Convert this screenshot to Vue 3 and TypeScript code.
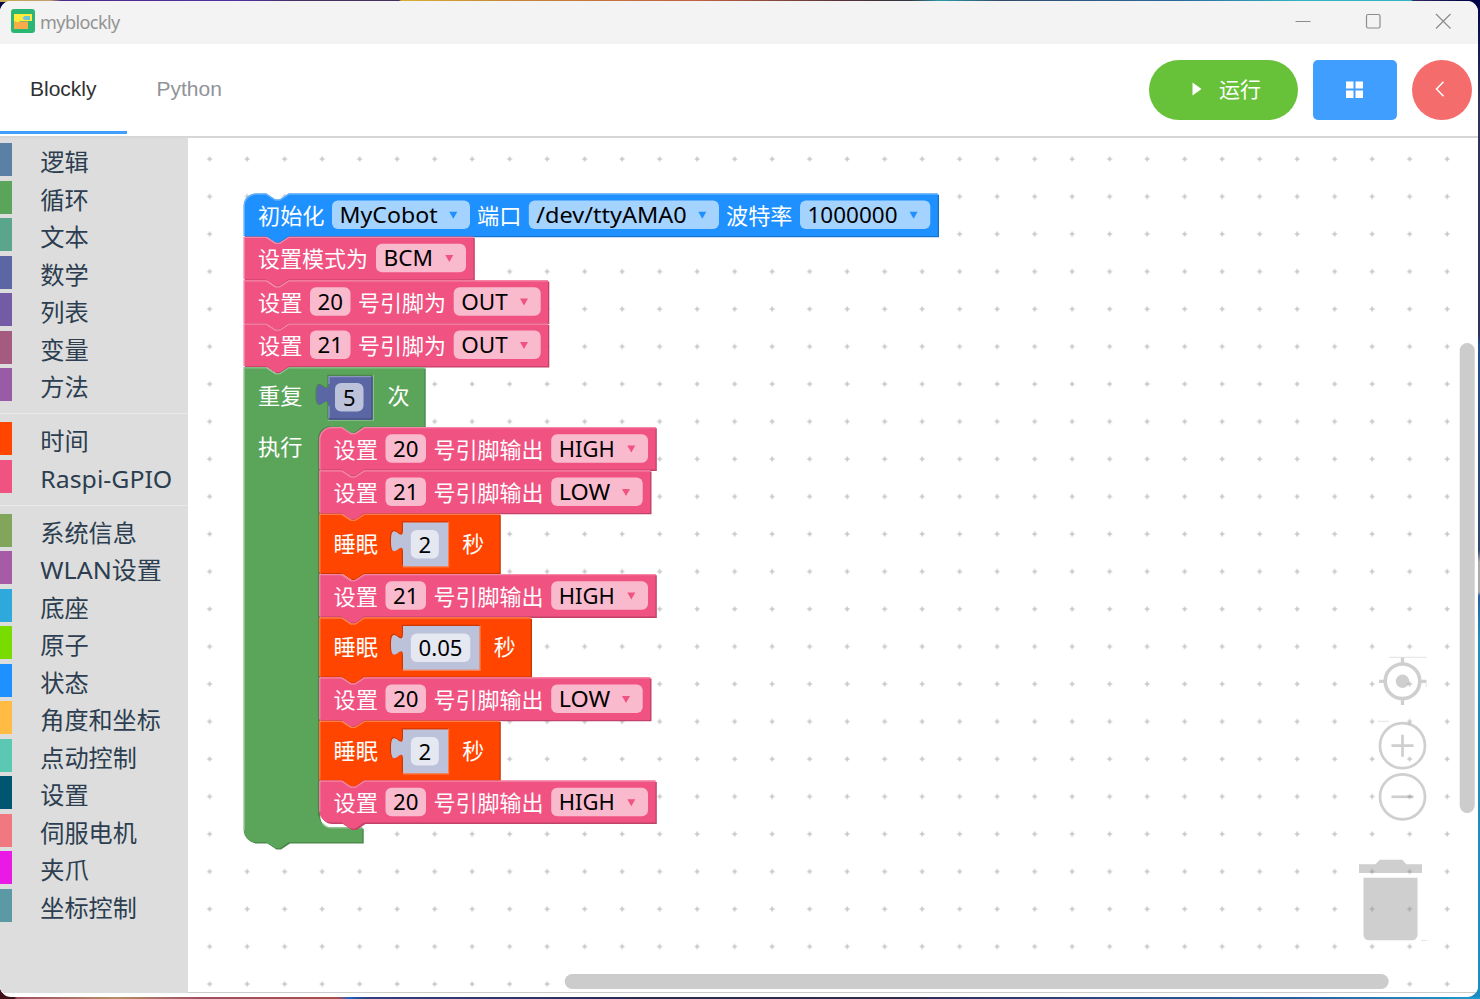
<script setup lang="ts">
interface Category { name: string; color: string; width: number }
interface Item { kind: 'label' | 'input' | 'select'; text: string; x: number; w: number; tw: number }
interface Value { x: number; w: number; tw: number; text: string; color: string; field: string; dark: string; light: string }
interface Block { x: number; y: number; w: number; h: number; color: string; dark: string; light: string; field: string; top?: boolean; last?: boolean; items: Item[]; value?: Value }

const groups: Category[][] = [
  [
    { name: '逻辑', color: '#5b80a5', width: 48.5 },
    { name: '循环', color: '#5ba55b', width: 48.5 },
    { name: '文本', color: '#5ba58c', width: 48.5 },
    { name: '数学', color: '#5b67a5', width: 48.5 },
    { name: '列表', color: '#745ba5', width: 48.5 },
    { name: '变量', color: '#a55b80', width: 48.5 },
    { name: '方法', color: '#995ba5', width: 48.5 },
  ],
  [
    { name: '时间', color: '#ff4500', width: 48.5 },
    { name: 'Raspi-GPIO', color: '#f05282', width: 132 },
  ],
  [
    { name: '系统信息', color: '#80a55b', width: 96.5 },
    { name: 'WLAN设置', color: '#a55ba5', width: 121.5 },
    { name: '底座', color: '#2fa8dc', width: 48.5 },
    { name: '原子', color: '#78dc00', width: 48.5 },
    { name: '状态', color: '#1e90ff', width: 48.5 },
    { name: '角度和坐标', color: '#ffbb44', width: 120.5 },
    { name: '点动控制', color: '#5bc8b4', width: 96.5 },
    { name: '设置', color: '#005670', width: 48.5 },
    { name: '伺服电机', color: '#f07880', width: 96.5 },
    { name: '夹爪', color: '#ea1ae6', width: 48.5 },
    { name: '坐标控制', color: '#5b99a5', width: 96.5 },
  ],
]

const pink = { color: '#f05282', dark: '#c04268', light: '#f586a8', field: '#f9bacd' }
const orange = { color: '#ff4500', dark: '#cc3700', light: '#ff7d4d', field: '#ffb599' }
const L = (text: string, x: number, w: number): Item => ({ kind: 'label', text, x, w, tw: w })
const N = (text: string, x: number): Item => ({ kind: 'input', text, x, w: 40.5, tw: 25.5 })
const S = (text: string, x: number, w: number, tw: number): Item => ({ kind: 'select', text, x, w, tw })

const output = (y: number, pin: string, level: 'HIGH' | 'LOW', extra: Partial<Block> = {}): Block => ({
  x: 319.2, y, w: level === 'HIGH' ? 336.3 : 331, h: 43.4, ...pink,
  items: [
    L('设置', 333.5, 44.5), N(pin, 385.5), L('号引脚输出', 433.5, 110),
    level === 'HIGH' ? S('HIGH', 551.2, 96.8, 56) : S('LOW', 551.2, 91.5, 51.5),
  ],
  ...extra,
})
const sleep = (y: number, text: string, long: boolean): Block => ({
  x: 319.2, y, w: long ? 211.5 : 180.3, h: 60, ...orange,
  items: [L('睡眠', 333.5, 44.5), L('秒', long ? 493.7 : 462.3, 22)],
  value: { x: 403, w: long ? 76.5 : 45, tw: long ? 44 : 12.7, text, color: '#bdc2db', field: '#e5e7f1', dark: '#d03a04', light: '#ff7d4d' },
})

const blocks: Block[] = [
  {
    x: 243.7, y: 193.5, w: 694, h: 43.2, color: '#1e90ff', dark: '#1873cc', light: '#62b1ff', field: '#a5d3ff', top: true,
    items: [L('初始化', 258, 66.5), S('MyCobot', 332, 138, 98), L('端口', 477, 44.5), S('/dev/ttyAMA0', 528.8, 190.2, 150.5), L('波特率', 726, 66.5), S('1000000', 800, 130.3, 90)],
  },
  { x: 243.7, y: 236.8, w: 229.8, h: 43.4, ...pink, items: [L('设置模式为', 258, 110), S('BCM', 376, 90, 49.5)] },
  { x: 243.7, y: 280.3, w: 304.3, h: 43.4, ...pink, items: [L('设置', 258, 44.5), N('20', 310), L('号引脚为', 358, 88), S('OUT', 453.7, 87, 46.5)] },
  { x: 243.7, y: 323.6, w: 304.3, h: 43.4, ...pink, items: [L('设置', 258, 44.5), N('21', 310), L('号引脚为', 358, 88), S('OUT', 453.7, 87, 46.5)] },
]
const inner: Block[] = [
  output(427, '20', 'HIGH', { top: true }),
  output(470.3, '21', 'LOW'),
  sleep(513.8, '2', false),
  output(574, '21', 'HIGH'),
  sleep(617.4, '0.05', true),
  output(677.3, '20', 'LOW'),
  sleep(720.8, '2', false),
  output(780.6, '20', 'HIGH', { last: true, h: 42.8 }),
]
const loopValue: Value = { x: 328.5, w: 44, tw: 12.7, text: '5', color: '#5b67a5', field: '#bdc2db', dark: '#495284', light: '#8c95c0' }
const loopPath = 'M243.7 367.2h22.500l9 6h4.500l9 -6H424.400V426.800H362.500l-9 6h-4.500l-9 -6h-9a12 12 0 0 0 -12 12V815.500a12 12 0 0 0 12 12H362.400V842.300H288.700l-9 6h-4.500l-9 -6h-10.500a12 12 0 0 1 -12 -12Z'

const outline = (b: Block): string => {
  const head = b.top
    ? `M${b.x} ${b.y + 12}a12 12 0 0 1 12 -12h10.5`
    : `M${b.x} ${b.y}h22.5`
  const end = b.last ? `H${b.x + 12}a12 12 0 0 1 -12 -12Z` : `H${b.x}Z`
  return `${head}l9 6h4.5l9 -6H${b.x + b.w}v${b.h - 0.8}H${b.x + 45}l-9 6h-4.5l-9 -6${end}`
}
const highlight = (b: Block): string => {
  const bottom = b.y + b.h - (b.last ? 12 : 1.5)
  const head = b.top
    ? `M${b.x + 0.6} ${bottom}V${b.y + 12.6}a12 12 0 0 1 12 -12h10`
    : `M${b.x + 0.6} ${bottom}V${b.y + 0.6}h22`
  return `${head}l9 6h4.5l9 -6H${b.x + b.w}`
}
const tab = (v: Value, y: number): string =>
  `M${v.x} ${y}H${v.x + v.w}v43.7H${v.x}V${y + 30}c0 -15 -12 12 -12 -11.25s12 3.75 12 -11.25Z`
const groove = (v: Value, y: number): string =>
  `M${v.x + v.w} ${y}H${v.x - 0.5}v7.5c0 15 -12 -12 -12 11.25s12 -3.75 12 11.25v13.5`
</script>

<template>
  <div class="desktop">
    <div class="window">
      <header class="titlebar">
        <svg class="logo" width="24" height="24" viewBox="0 0 24 24">
          <rect width="24" height="24" rx="3" fill="#2bb673" />
          <path d="M3 5h18v7H9.500l-3 2-1.500-1H3z" fill="#ffeb3b" />
          <path d="M11.500 9l2-2H19v4h-5.500z" fill="#6ec5d6" />
          <path d="M3 12.500h2l1.500 1.200 2.500-1.200h8V20H3z" fill="#f9ab4b" />
        </svg>
        <span class="title">myblockly</span>
        <div class="controls">
          <svg width="16" height="16" viewBox="0 0 16 16"><path d="M.5 8.500h15" /></svg>
          <svg width="16" height="16" viewBox="0 0 16 16"><rect x="1.500" y="1.500" width="13.500" height="13.500" rx="1.500" /></svg>
          <svg width="16" height="16" viewBox="0 0 16 16"><path d="M1 1l14.500 14.500M15.500 1L1 15.500" /></svg>
        </div>
      </header>

      <nav class="toolbar">
        <div class="tab active">Blockly</div>
        <div class="tab">Python</div>
        <div class="actions">
          <button class="btn run">
            <svg width="10" height="14" viewBox="0 0 10 14"><path d="M.5.5v13L9.500 7z" fill="#fff" /></svg>
            <span>运行</span>
          </button>
          <button class="btn grid">
            <svg width="17" height="17" viewBox="0 0 17 17" fill="#fff">
              <path d="M0 0.500h7.500v7H0zM9.500 .5H17v7H9.500zM0 9.500h7.500V17H0zM9.500 9.500H17V17H9.500z" />
            </svg>
          </button>
          <button class="btn back">
            <svg width="10" height="16" viewBox="0 0 10 16"><path d="M8.500 .8L1.500 8l7 7.200" fill="none" stroke="#fff" stroke-width="1.500" /></svg>
          </button>
        </div>
      </nav>

      <main class="editor">
        <aside class="toolbox">
          <div v-for="(group, g) in groups" :key="g" class="group">
            <div v-for="c in group" :key="c.name" class="category">
              <i class="swatch" :style="{ background: c.color }"></i>
              <svg class="name" width="140" height="33">
                <text x="0.300" y="28.200" :textLength="c.width" lengthAdjust="spacingAndGlyphs">{{ c.name }}</text>
              </svg>
            </div>
          </div>
        </aside>

        <svg class="workspace" width="1290" height="854" viewBox="188 138 1290 854">
          <defs>
            <pattern id="dots" x="190.900" y="140.300" width="37.500" height="37.500" patternUnits="userSpaceOnUse">
              <path d="M16.400 18.750h4.700M18.750 16.400v4.700" stroke="#c6c6c6" stroke-width="1.500" />
            </pattern>
          </defs>
          <rect x="188" y="138" width="1290" height="854" fill="url(#dots)" />

          <g v-for="(b, i) in blocks" :key="'o' + i">
            <path :d="outline(b)" :fill="b.dark" transform="translate(1.3 1.3)" />
            <path :d="outline(b)" :fill="b.color" />
            <path :d="highlight(b)" class="line" :stroke="b.light" />
            <template v-for="(t, k) in b.items" :key="k">
              <text v-if="t.kind === 'label'" class="label" :x="t.x" :y="b.y + 30.300" :textLength="t.tw" lengthAdjust="spacingAndGlyphs">{{ t.text }}</text>
              <template v-else>
                <rect :x="t.x" :y="b.y + 7" :width="t.w" height="28.500" rx="6" :fill="b.field" />
                <text class="value" :x="t.x + 7.500" :y="b.y + 29.500" :textLength="t.tw" lengthAdjust="spacingAndGlyphs">{{ t.text }}</text>
                <path v-if="t.kind === 'select'" :d="`M${t.x + t.w - 20.7} ${b.y + 18.3}h8l-4 7z`" :fill="b.color" />
              </template>
            </template>
          </g>

          <path :d="loopPath" fill="#498449" transform="translate(1.3 1.3)" />
          <path :d="loopPath" fill="#5ba55b" />
          <path d="M244.300 830V367.800h22l9 6h4.500l9 -6H424.400M322.700 824a12 12 0 0 0 8.500 3.900H362.400" class="line" stroke="#8cc08c" />
          <path d="M318.600 816V438.800a12 12 0 0 1 12 -12" class="line" stroke="#498449" />
          <text class="label" x="258" y="404.300" textLength="44.500" lengthAdjust="spacingAndGlyphs">重复</text>
          <text class="label" x="387.500" y="404.300">次</text>
          <text class="label" x="258" y="455.200" textLength="44.500" lengthAdjust="spacingAndGlyphs">执行</text>
          <path d="M373.300 375v45.200H328" class="line" stroke="#8cc08c" />
          <path :d="groove(loopValue, 375.5)" class="line" stroke="#498449" />
          <path :d="tab(loopValue, 376)" :fill="loopValue.color" />
          <path d="M329 418V406M329 384V376.700H371" class="line" :stroke="loopValue.light" />
          <path d="M372 377v42H329" class="line" :stroke="loopValue.dark" />
          <rect x="335" y="383" width="28.500" height="28.500" rx="6" :fill="loopValue.field" />
          <text class="value" x="343" y="405.700" textLength="12.700">5</text>

          <g v-for="(b, i) in inner" :key="'i' + i">
            <path :d="outline(b)" :fill="b.dark" transform="translate(1.3 1.3)" />
            <path :d="outline(b)" :fill="b.color" />
            <path :d="highlight(b)" class="line" :stroke="b.light" />
            <g v-if="b.value">
              <path :d="`M${b.value.x + b.value.w + 0.5} ${b.y + 8}v45H${b.value.x}`" class="line" :stroke="b.light" />
              <path :d="groove(b.value, b.y + 8)" class="line" :stroke="b.dark" />
              <path :d="tab(b.value, b.y + 8.7)" :fill="b.value.color" />
              <rect :x="b.value.x + 7.800" :y="b.y + 16.200" :width="b.value.w - 17" height="28.500" rx="6" :fill="b.value.field" />
              <text class="value" :x="b.value.x + 15.500" :y="b.y + 38.700" :textLength="b.value.tw" lengthAdjust="spacingAndGlyphs">{{ b.value.text }}</text>
            </g>
            <template v-for="(t, k) in b.items" :key="k">
              <text v-if="t.kind === 'label'" class="label" :x="t.x" :y="b.y + (b.value ? 37.8 : 30.6)" :textLength="t.tw" lengthAdjust="spacingAndGlyphs">{{ t.text }}</text>
              <template v-else>
                <rect :x="t.x" :y="b.y + 7.200" :width="t.w" height="28.500" rx="6" :fill="b.field" />
                <text class="value" :x="t.x + 7.500" :y="b.y + 29.800" :textLength="t.tw" lengthAdjust="spacingAndGlyphs">{{ t.text }}</text>
                <path v-if="t.kind === 'select'" :d="`M${t.x + t.w - 20.7} ${b.y + 18.6}h8l-4 7z`" :fill="b.color" />
              </template>
            </template>
          </g>

          <g class="tools" opacity=".4" stroke="#888" fill="none">
            <g stroke-width="2.700">
              <circle cx="1402.500" cy="681.300" r="17.300" stroke-width="3.600" />
              <path d="M1402.500 657.500v6M1402.500 699v6M1379 681.300h6M1420 681.300h6" stroke-width="3.300" />
              <circle cx="1402.500" cy="681.300" r="6.700" fill="#888" stroke="none" />
              <circle cx="1402.500" cy="745.700" r="22.500" />
              <path d="M1391.500 745.700h22M1402.500 734.700v22" />
              <circle cx="1402.500" cy="796.800" r="22.500" />
              <path d="M1391.500 796.800h22" />
            </g>
            <path d="M1389 657.300h37.500M1378 721.300h11M1426.300 680v7M1421 940.500h6" stroke-width=".6" />
            <g fill="#888" stroke="none">
              <path d="M1359 864.300h16.500l4.200-4.500h22.500l4.200 4.500h15.600v8.700h-63z" />
              <path d="M1363.500 877.800h54v57a5.500 5.500 0 0 1 -5.500 5.500h-43a5.500 5.500 0 0 1 -5.500 -5.500z" />
            </g>
          </g>
          <rect x="1459.700" y="343" width="15" height="470" rx="7.500" fill="#ccc" />
          <rect x="564.700" y="974" width="824" height="15" rx="7.500" fill="#ccc" />
        </svg>
      </main>
    </div>
  </div>
</template>

<style>
html, body { margin: 0; overflow: hidden; }
</style>

<style scoped>
.desktop {
  box-sizing: border-box;
  width: 1480px;
  height: 999px;
  padding: 1px 2px 2px 0;
  background:
    linear-gradient(90deg, #c8a850 0, #c0a070 50px, #4a2a8a 62px, #5030a0 240px, #403060 300px, #40305c 399px, #d8b030 401px, #c88838 500px, #c06040 700px, #503038 850px, #303840 910px, #2a9aaa 940px, #304a6a 1000px, #2a6aa0 1180px, #30b4c0 1300px, #30b4c0 1411px, #302a60 1413px, #000048 1470px) top / 100% 2px no-repeat,
    linear-gradient(90deg, #401018 0, #401018 14px, #a05060 17px, #b09068 115px, #a05060 200px, #a85048 337px, #2060c0 350px, #304080 365px, #282c50 650px, #302c50 900px, #2a4a80 1100px, #2a60a0 1300px, #1a9cd0 1480px) bottom / 100% 2px no-repeat,
    linear-gradient(90deg, #401018 0, #401018 50%, transparent 50%) bottom / 100% 12px no-repeat,
    linear-gradient(180deg, #000048 0, #303060 100px, #303060 335px, #20508a 345px, #304870 550px, #aaa 562px, #aaa 592px, #2a60a0 596px, #2090b8 640px, #1a8cc0 100%);
}
.window {
  display: flex;
  flex-direction: column;
  height: 996px;
  background: #fff;
  border-radius: 11px;
  overflow: hidden;
}
.titlebar {
  display: flex;
  align-items: center;
  flex: none;
  height: 43px;
  padding: 0 27px 0 11px;
  background: #f3f3f3;
}
.logo { margin-top: -3px; }
.title {
  margin: -2px 0 0 5px;
  font: 18px/24px "Noto Sans", sans-serif;
  letter-spacing: -.55px;
  color: #929292;
}
.controls { display: flex; gap: 54px; margin: -3px 0 0 auto; }
.controls svg { fill: none; stroke: #8c8c8c; stroke-width: 1.2; overflow: visible; }
.toolbar {
  box-sizing: border-box;
  display: flex;
  flex: none;
  height: 94px;
  border-bottom: 2px solid #d6d6d6;
}
.tab {
  box-sizing: border-box;
  height: 90px;
  padding: 0 29.5px;
  font: 21px/90px "Liberation Sans", Arial, sans-serif;
  color: #909399;
}
.tab.active { width: 127px; padding-left: 30px; color: #303133; border-bottom: 3px solid #409eff; }
.actions { display: flex; gap: 15px; margin: 16px 6px 0 auto; }
.btn {
  display: flex;
  align-items: center;
  justify-content: center;
  box-sizing: border-box;
  height: 60px;
  padding: 0;
  border: 0;
  color: #fff;
  font: 21px/30px "Noto Sans CJK SC", sans-serif;
}
.btn svg { margin-top: -2px; }
.run { width: 149px; gap: 17px; border-radius: 30px; background: #67c23a; padding-left: 6px; }
.run span { margin-top: -4px; }
.grid { width: 84px; border-radius: 5px; background: #409eff; padding-right: 2px; }
.back { width: 60px; border-radius: 50%; background: #f56c6c; padding-right: 4px; }
.editor { display: flex; flex: none; height: 855px; background: #fff; }
.toolbox {
  box-sizing: border-box;
  flex: none;
  width: 188px;
  padding-top: 5px;
  background: #ddd;
}
.group { display: flow-root; }
.group + .group { margin-top: 7.5px; border-top: 1px solid #e8e8e8; padding-top: 8px; }
.category { display: flex; height: 33px; margin-bottom: 4.5px; }
.swatch { width: 12px; height: 33px; margin-right: 28px; }
.name { overflow: visible; }
.name text { font: 24px "Noto Sans", "Noto Sans CJK SC", sans-serif; fill: #2c3e50; }
.workspace { display: block; border-bottom: 1px solid #ccc; }
.label { font: 22px "Noto Sans CJK SC", sans-serif; fill: #fff; }
.value { font: 22px "Noto Sans", "Open Sans", sans-serif; fill: #000; }
.line { fill: none; stroke-width: 1.3; }
</style>
